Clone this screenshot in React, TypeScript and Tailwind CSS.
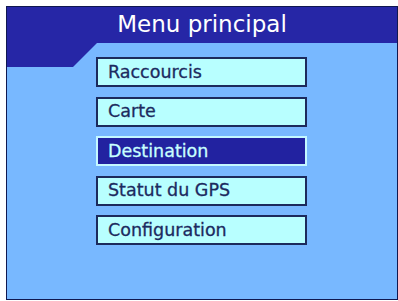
const items = ['Raccourcis', 'Carte', 'Destination', 'Statut du GPS', 'Configuration']
const selected = 'Destination'

export default function App() {
  return (
    <div className="w-[398px] h-[301px] bg-white pl-[6px] pt-[6px]" style={{ fontFamily: '"DejaVu Sans", Verdana, sans-serif' }}>
      <div className="w-[392px] h-[294px] border border-[#101850] bg-[#78b8ff] flex flex-col">
        <div className="h-[36px] bg-[#2626a6] flex items-center justify-center text-white text-[23px] leading-none pb-[1px]">
          Menu principal
        </div>
        <div className="flex">
          <div className="w-[89px] shrink-0">
            <svg width="90" height="24" viewBox="0 0 90 24" className="block">
              <polygon points="0,0 90,0 66,24 0,24" fill="#2626a6" />
            </svg>
          </div>
          <div className="flex flex-col gap-[9.5px] pt-[14px]">
            {items.map(item => (
              <div
                key={item}
                className={
                  item === selected
                    ? 'w-[211px] h-[30px] border-2 border-[#c4f8ff] bg-[#2222a0] text-[#c8ffff] flex items-center pl-[10px] text-[17.5px] [-webkit-text-stroke:0.3px_#c8ffff]'
                    : 'w-[211px] h-[30px] border-2 border-[#1c2a5c] bg-[#b8ffff] text-[#1c2a60] flex items-center pl-[10px] text-[17.5px] [-webkit-text-stroke:0.3px_#1c2a60]'
                }
              >
                {item}
              </div>
            ))}
          </div>
        </div>
      </div>
    </div>
  )
}
